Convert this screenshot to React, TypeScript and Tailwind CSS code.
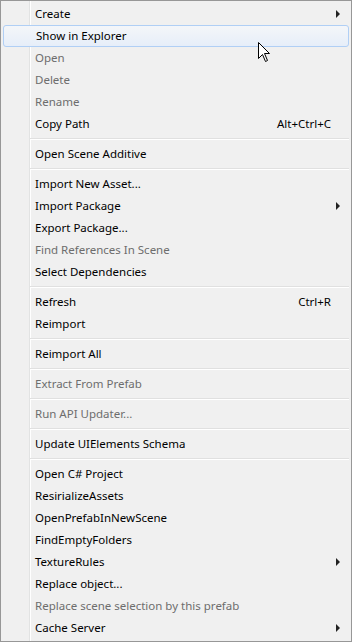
import React from "react";

type Item =
  | { sep: true }
  | { label: string; disabled?: boolean; shortcut?: string; sub?: boolean; hover?: boolean };

const items: Item[] = [
  { label: "Create", sub: true },
  { label: "Show in Explorer", hover: true },
  { label: "Open", disabled: true },
  { label: "Delete", disabled: true },
  { label: "Rename", disabled: true },
  { label: "Copy Path", shortcut: "Alt+Ctrl+C" },
  { sep: true },
  { label: "Open Scene Additive" },
  { sep: true },
  { label: "Import New Asset..." },
  { label: "Import Package", sub: true },
  { label: "Export Package..." },
  { label: "Find References In Scene", disabled: true },
  { label: "Select Dependencies" },
  { sep: true },
  { label: "Refresh", shortcut: "Ctrl+R" },
  { label: "Reimport" },
  { sep: true },
  { label: "Reimport All" },
  { sep: true },
  { label: "Extract From Prefab", disabled: true },
  { sep: true },
  { label: "Run API Updater...", disabled: true },
  { sep: true },
  { label: "Update UIElements Schema" },
  { sep: true },
  { label: "Open C# Project" },
  { label: "ResirializeAssets" },
  { label: "OpenPrefabInNewScene" },
  { label: "FindEmptyFolders" },
  { label: "TextureRules", sub: true },
  { label: "Replace object..." },
  { label: "Replace scene selection by this prefab", disabled: true },
  { label: "Cache Server", sub: true },
];

function Cursor() {
  return (
    <svg
      className="absolute left-[257px] top-[41px]"
      width="13"
      height="21"
      viewBox="0 0 13 21"
    >
      <path
        d="M0.5 0.5 L0.5 16.5 L4.5 12.5 L7.5 19.5 L9.5 18.5 L6.5 11.5 L11.5 11.5 Z"
        fill="#ffffff"
        stroke="#000000"
        strokeWidth="1"
        strokeLinejoin="miter"
      />
    </svg>
  );
}

export default function App() {
  return (
    <div
      className="relative w-[352px] h-[642px] border border-[#979797] bg-[#f0f0f0] pt-[2px] px-[2px] bg-[linear-gradient(to_right,transparent_28px,#e2e3e3_28px,#e2e3e3_29px,#ffffff_29px,#ffffff_30px,transparent_30px)]"
      style={{ fontFamily: '"Noto Sans", "Noto Sans CJK KR", sans-serif' }}
    >
      {items.map((it, i) => {
        if ("sep" in it) {
          return (
            <div key={i} className="h-[8px] pt-[3px] pl-[27px]">
              <div className="h-px bg-[#e0e0e0]" />
              <div className="h-px bg-white" />
            </div>
          );
        }
        return (
          <div
            key={i}
            className={
              "flex items-center h-[22px] pl-[32px] pr-[9px] text-[11.5px] leading-none " +
              (it.disabled ? "text-[#6d6d6d] " : "text-black ") +
              (it.hover
                ? "rounded-[3px] border border-[#b0cff5] bg-gradient-to-b from-[#f4f6f9] to-[#e6eef9] pl-[31px] pr-[8px] "
                : "")
            }
          >
            <span className="flex-1 whitespace-nowrap">{it.label}</span>
            {it.shortcut && <span className="mr-[9px] whitespace-nowrap">{it.shortcut}</span>}
            {it.sub && (
              <span className="w-0 h-0 border-y-[4px] border-y-transparent border-l-[4px] border-l-[#222222]" />
            )}
          </div>
        );
      })}
      <Cursor />
    </div>
  );
}
